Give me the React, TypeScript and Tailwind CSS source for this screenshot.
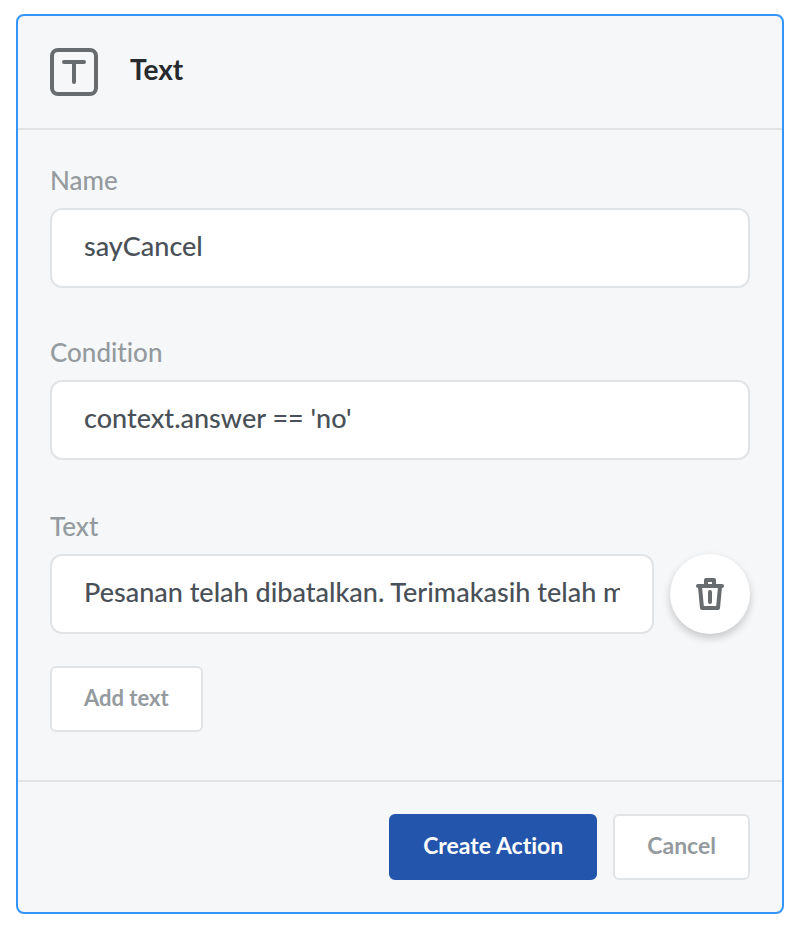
import { useState } from 'react';
import type { ReactNode } from 'react';

const inputClass =
  'block h-20 w-full min-w-0 rounded-xl border-2 border-[#e1e4e7] bg-white px-8 pb-1.5 text-[27px] font-medium text-[#495057] outline-none';

const secondaryButton =
  'h-[66px] rounded-md border-2 border-[#e1e4e7] bg-white px-8 pb-1 font-bold text-[#949a9e]';

function Field({ id, label, children }: { id: string; label: string; children: ReactNode }) {
  return (
    <div>
      <label htmlFor={id} className="mb-3.5 block text-[26px] leading-7 font-medium text-[#949a9e]">
        {label}
      </label>
      {children}
    </div>
  );
}

function TextIcon() {
  return (
    <svg className="size-12 shrink-0" viewBox="0 0 48 48" fill="none" stroke="#686c6f" strokeWidth="4" strokeLinecap="round" aria-hidden="true">
      <rect x="2" y="2" width="44" height="44" rx="6" />
      <path d="M14 14H34M24 14V34" />
    </svg>
  );
}

function TrashIcon() {
  return (
    <svg className="h-8 w-7" viewBox="0 0 28 32" fill="none" stroke="#686c6f" strokeWidth="4" strokeLinecap="round" strokeLinejoin="round" aria-hidden="true">
      <path d="M2 8H26" />
      <path d="M10 7V2H18V7" />
      <path d="M4 9L6 30H22L24 9" />
      <path d="M14 14V24" />
    </svg>
  );
}

export default function App() {
  const [name, setName] = useState('sayCancel');
  const [condition, setCondition] = useState("context.answer == 'no'");
  const [text, setText] = useState('Pesanan telah dibatalkan. Terimakasih telah memesan');

  return (
    <main className="min-h-screen bg-white pt-[14px] pr-3 pb-[18px] pl-4 font-['Lato','Open_Sans',sans-serif] [font-variant-ligatures:none]">
      <form className="rounded-lg border-2 border-[#3394f9] bg-[#f5f7f9]" onSubmit={(e) => e.preventDefault()}>
        <header className="flex items-center gap-8 border-b-2 border-[#e1e4e7] p-8">
          <TextIcon />
          <h1 className="pb-1.5 text-[28px] leading-9 font-bold text-[#26292d]">Text</h1>
        </header>

        <div className="flex flex-col gap-[50px] px-8 pt-9 pb-12">
          <Field id="name" label="Name">
            <input id="name" className={inputClass} value={name} onChange={(e) => setName(e.target.value)} />
          </Field>
          <Field id="condition" label="Condition">
            <input id="condition" className={inputClass} value={condition} onChange={(e) => setCondition(e.target.value)} />
          </Field>
          <div className="pt-0.5">
            <Field id="text" label="Text">
              <div className="flex items-center gap-4">
                <input id="text" className={inputClass} value={text} onChange={(e) => setText(e.target.value)} />
                <button
                  type="button"
                  aria-label="Delete text"
                  className="flex size-20 shrink-0 items-center justify-center rounded-full bg-white shadow-[0_4px_8px_rgba(0,0,0,0.2)]"
                >
                  <TrashIcon />
                </button>
              </div>
            </Field>
            <button type="button" className={`mt-8 text-[22px] ${secondaryButton}`}>
              Add text
            </button>
          </div>
        </div>

        <footer className="flex justify-end gap-4 border-t-2 border-[#e1e4e7] p-8 text-[23px]">
          <button type="submit" className="h-[66px] rounded-md border-2 border-[#2455ac] bg-[#2455ac] px-8 pb-1 font-bold text-white">
            Create Action
          </button>
          <button type="button" className={secondaryButton}>
            Cancel
          </button>
        </footer>
      </form>
    </main>
  );
}
